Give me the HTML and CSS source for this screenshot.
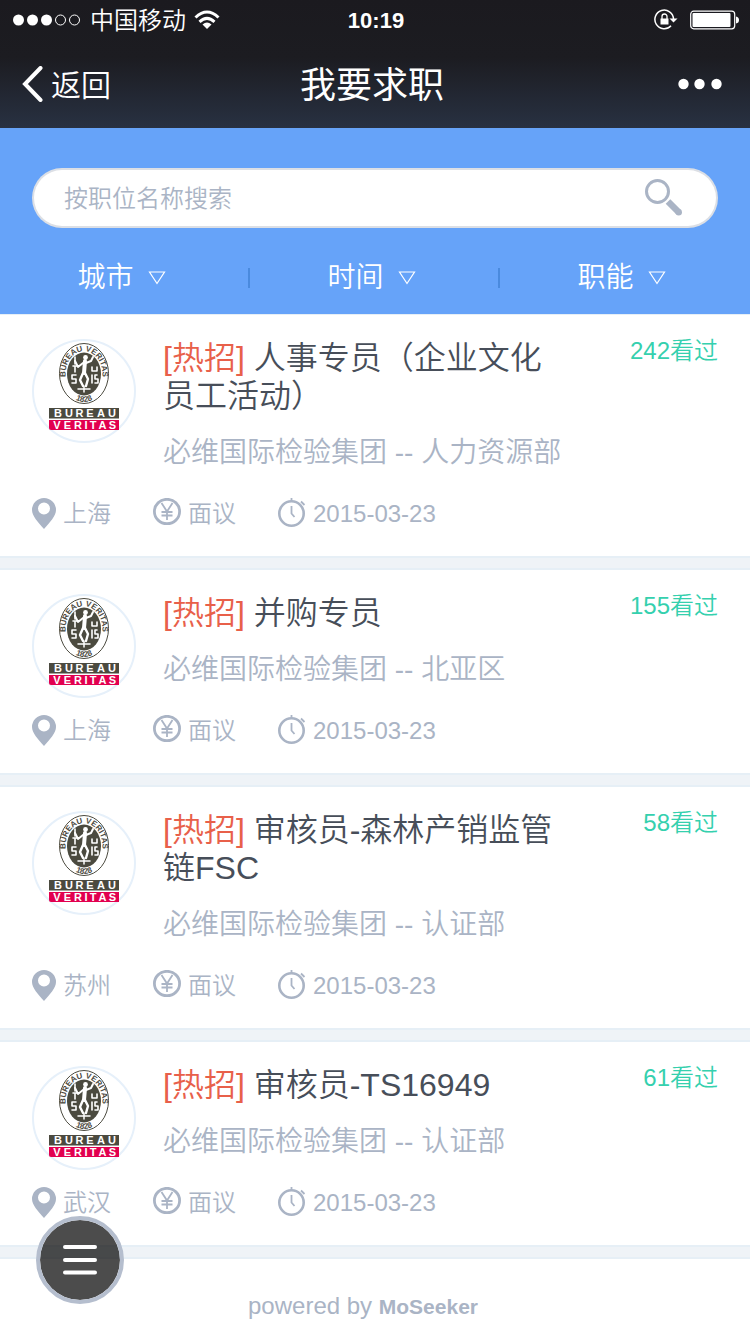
FILE: index.html
```html
<!DOCTYPE html>
<html lang="zh-CN">
<head>
<meta charset="utf-8">
<meta name="viewport" content="width=device-width">
<title>我要求职</title>
<link rel="stylesheet" href="styles.css">
</head>
<body>
<svg class="sprite" aria-hidden="true">
  <symbol id="logo" viewBox="0 0 104 104">
    <circle cx="52" cy="52" r="51" fill="#fff" stroke="#e6f0fa" stroke-width="2"/>
    <ellipse cx="52" cy="34.500" rx="24.500" ry="30" fill="#fff" stroke="#4b4a3f"/>
    <path id="ring-top" d="M35.500 46 A18.500 23.300 0 1 1 68.500 46" fill="none"/>
    <path id="ring-low" d="M36 54 A22 28.500 0 0 0 68 54" fill="none"/>
    <text class="logo-ring"><textPath href="#ring-top" startOffset="50%" text-anchor="middle">BUREAU VERITAS</textPath></text>
    <text class="logo-year"><textPath href="#ring-low" startOffset="50%" text-anchor="middle">1828</textPath></text>
    <ellipse cx="52" cy="35" rx="17" ry="21.500" fill="#4b4a3f"/>
    <g fill="none" stroke="#fff" stroke-linecap="round" stroke-linejoin="round">
      <path d="M53 22 L52 34" stroke-width="4"/>
      <path d="M51 24 L46 28 L43 22 M54 24 L59 22 L61 18" stroke-width="2"/>
      <path d="M51 34 L48 41 L51 47 M53 34 L56 40 L54 47" stroke-width="2.400"/>
      <path d="M43 18 V25 M41 27 H45 M43 28 V33 M40 36 H44 M40 36 V40 H44 V44 H40 M60 28 V32 H65 V28 M60 36 V44 M65 36 H63 V40 H66 V44 H63" stroke-width="1.600"/>
      <path d="M46 50 H58 M52 47 V53" stroke-width="1.500"/>
    </g>
    <circle cx="53.500" cy="18.500" r="2.400" fill="#fff"/>
    <path d="M17 69H87V79.500H17Z" fill="#4b4a3f"/>
    <path d="M17 81H87V91H19Q17 91 17 89Z" fill="#e2004f"/>
    <g class="logo-word">
      <text y="78" x="26 37 47.500 58 69 80">BUREAU</text>
      <text y="89.500" x="25 35.500 46 54 61 70.500 80.500">VERITAS</text>
    </g>
  </symbol>
  <symbol id="pin" viewBox="0 0 24 32">
    <path d="M12 0A12 12 0 0 0 0 12C0 18 6 24 12 31C18 24 24 18 24 12A12 12 0 0 0 12 0ZM12 4.500A6 6 0 1 1 12 16.500A6 6 0 1 1 12 4.500Z" fill="#aab4c5" fill-rule="evenodd"/>
  </symbol>
  <symbol id="yen" viewBox="0 0 28 28">
    <g fill="none" stroke="#aab4c5">
      <ellipse cx="14" cy="13.500" rx="12.600" ry="12.200" stroke-width="2.800"/>
      <path d="M8.500 5L14 13.500L19.500 5M14 13V22M8.500 14H19.500M8.500 17.500H19.500" stroke-width="1.800"/>
    </g>
  </symbol>
  <symbol id="clock" viewBox="0 0 28 30">
    <g fill="none" stroke="#aab4c5">
      <circle cx="13.500" cy="15.500" r="12.200" stroke-width="2.600"/>
      <path d="M13.500 0V4M23 3.500L26.500 7" stroke-width="1.800"/>
      <path d="M13.500 8V15.500L16.500 19" stroke-width="1.800"/>
    </g>
  </symbol>
  <symbol id="caret" viewBox="0 0 18 14">
    <path d="M1.500 1H16.500L9 12.500Z" fill="none" stroke="#fff" stroke-width="1.200"/>
  </symbol>
</svg>

<header class="top">
  <div class="status">
    <div class="status-left">
      <svg width="70" height="14" viewBox="0 0 70 14" aria-hidden="true">
        <g fill="#fff"><circle cx="6.500" cy="7" r="5.500"/><circle cx="20.500" cy="7" r="5.500"/><circle cx="34.500" cy="7" r="5.500"/></g>
        <g fill="none" stroke="#fff"><circle cx="48.500" cy="7" r="5"/><circle cx="62.500" cy="7" r="5"/></g>
      </svg>
      <span class="carrier">中国移动</span>
      <svg width="26" height="20" viewBox="0 0 26 20" aria-hidden="true">
        <g fill="none" stroke="#fff" stroke-width="3"><path d="M1.500 7.500Q13 -3.500 24.500 7.500"/><path d="M5.500 11.800Q13 5 20.500 11.800"/></g>
        <path d="M8.500 14.500Q13 10.500 17.500 14.500L13 19Z" fill="#fff"/>
      </svg>
    </div>
    <time class="status-time">10:19</time>
    <div class="status-right">
      <svg width="24" height="22" viewBox="0 0 24 22" aria-hidden="true">
        <path d="M19.500 10A9.300 9.300 0 1 0 17 16.800" fill="none" stroke="#fff" stroke-width="1.500"/>
        <path d="M15.500 9.500H23.500L19.500 13.500Z" fill="#fff"/>
        <path d="M6.500 9.500H14.500V15.500H6.500Z" fill="#fff"/>
        <path d="M8 10V7.500A2.500 2.500 0 0 1 13 7.500V10" fill="none" stroke="#fff" stroke-width="1.300"/>
      </svg>
      <svg width="50" height="20" viewBox="0 0 50 20" aria-hidden="true">
        <rect x=".7" y="1.200" width="44" height="17.600" rx="3" fill="none" stroke="#fff" stroke-width="1.200"/>
        <rect x="2.500" y="3" width="38" height="14" rx="1" fill="#fff"/>
        <path d="M46 6.500Q49 7 49 10Q49 13 46 13.500Z" fill="#fff"/>
      </svg>
    </div>
  </div>
  <nav class="nav">
    <a class="back" href="#">
      <svg width="21" height="36" viewBox="0 0 21 36" aria-hidden="true"><path d="M18.500 2L3 18L18.500 34" fill="none" stroke="#fff" stroke-width="4" stroke-linecap="round"/></svg>
      <span class="back-text">返回</span>
    </a>
    <h1 class="nav-title">我要求职</h1>
    <button class="more" type="button" aria-label="更多">
      <svg width="44" height="12" viewBox="0 0 44 12"><g fill="#fff"><circle cx="5.500" cy="6" r="5.200"/><circle cx="21.500" cy="6" r="5.200"/><circle cx="38.500" cy="6" r="5.200"/></g></svg>
    </button>
  </nav>
</header>

<section class="tools">
  <form class="search">
    <input class="search-input" type="text" placeholder="按职位名称搜索" aria-label="按职位名称搜索">
    <button class="search-button" type="button" aria-label="搜索">
      <svg width="38" height="38" viewBox="0 0 38 38"><circle cx="12.500" cy="12.500" r="11" fill="none" stroke="#aab4c5" stroke-width="3"/><path d="M23 22.500L33.500 33" stroke="#aab4c5" stroke-width="6.500"/><circle cx="33.700" cy="33.200" r="3.250" fill="#aab4c5"/></svg>
    </button>
  </form>
  <div class="filters">
    <button class="filter" type="button">城市<svg class="caret"><use href="#caret"/></svg></button>
    <button class="filter" type="button">时间<svg class="caret"><use href="#caret"/></svg></button>
    <button class="filter" type="button">职能<svg class="caret"><use href="#caret"/></svg></button>
  </div>
</section>

<main class="jobs">
  <article class="job">
    <div class="job-head">
      <svg class="logo" role="img" aria-label="Bureau Veritas"><use href="#logo"/></svg>
      <div class="job-body">
        <h2 class="job-title"><span class="hot">[热招]</span> 人事专员（企业文化员工活动）</h2>
        <p class="company">必维国际检验集团 -- 人力资源部</p>
      </div>
      <span class="views">242看过</span>
    </div>
    <div class="meta">
      <span class="place"><svg class="pin"><use href="#pin"/></svg>上海</span>
      <span class="pay"><svg class="yen"><use href="#yen"/></svg>面议</span>
      <span class="date"><svg class="clock"><use href="#clock"/></svg>2015-03-23</span>
    </div>
  </article>
  <article class="job">
    <div class="job-head">
      <svg class="logo" role="img" aria-label="Bureau Veritas"><use href="#logo"/></svg>
      <div class="job-body">
        <h2 class="job-title"><span class="hot">[热招]</span> 并购专员</h2>
        <p class="company">必维国际检验集团 -- 北亚区</p>
      </div>
      <span class="views">155看过</span>
    </div>
    <div class="meta">
      <span class="place"><svg class="pin"><use href="#pin"/></svg>上海</span>
      <span class="pay"><svg class="yen"><use href="#yen"/></svg>面议</span>
      <span class="date"><svg class="clock"><use href="#clock"/></svg>2015-03-23</span>
    </div>
  </article>
  <article class="job">
    <div class="job-head">
      <svg class="logo" role="img" aria-label="Bureau Veritas"><use href="#logo"/></svg>
      <div class="job-body">
        <h2 class="job-title"><span class="hot">[热招]</span> 审核员-森林产销监管链FSC</h2>
        <p class="company">必维国际检验集团 -- 认证部</p>
      </div>
      <span class="views">58看过</span>
    </div>
    <div class="meta">
      <span class="place"><svg class="pin"><use href="#pin"/></svg>苏州</span>
      <span class="pay"><svg class="yen"><use href="#yen"/></svg>面议</span>
      <span class="date"><svg class="clock"><use href="#clock"/></svg>2015-03-23</span>
    </div>
  </article>
  <article class="job">
    <div class="job-head">
      <svg class="logo" role="img" aria-label="Bureau Veritas"><use href="#logo"/></svg>
      <div class="job-body">
        <h2 class="job-title"><span class="hot">[热招]</span> 审核员-TS16949</h2>
        <p class="company">必维国际检验集团 -- 认证部</p>
      </div>
      <span class="views">61看过</span>
    </div>
    <div class="meta">
      <span class="place"><svg class="pin"><use href="#pin"/></svg>武汉</span>
      <span class="pay"><svg class="yen"><use href="#yen"/></svg>面议</span>
      <span class="date"><svg class="clock"><use href="#clock"/></svg>2015-03-23</span>
    </div>
  </article>
</main>

<footer class="footer">powered by <strong class="brand">MoSeeker</strong></footer>

<button class="menu" type="button" aria-label="菜单">
  <svg width="34" height="32" viewBox="0 0 34 32"><path d="M2 3H32M2 16H32M2 28.500H32" stroke="#fff" stroke-width="4" stroke-linecap="round"/></svg>
</button>
</body>
</html>
```
FILE: styles.css
```css
* {
  box-sizing: border-box;
}

body {
  margin: 0;
  background: #fff;
  color: #aab4c5;
  font-family: "Liberation Sans", "Noto Sans CJK SC", sans-serif;
  font-size: 24px;
  font-weight: 350;
  line-height: 32px;
}

h1,
h2,
p {
  margin: 0;
  font-weight: 350;
}

svg {
  display: block;
  flex: none;
}

button,
input {
  padding: 0;
  border: 0;
  background: none;
  color: inherit;
  font: inherit;
}

.sprite {
  position: absolute;
  width: 0;
  height: 0;
}

.top {
  background: linear-gradient(#1b1a1f, #1c1c21 45%, #283142);
  color: #fff;
}

.status {
  display: grid;
  grid-template-columns: 1fr auto 1fr;
  align-items: center;
  height: 40px;
  padding: 0 10px 0 12px;
}

.status-left,
.status-right {
  display: flex;
  align-items: center;
  gap: 8px;
}

.status-right {
  justify-content: flex-end;
  gap: 12px;
}

.carrier {
  padding-top: 2px;
}

.status-time {
  padding-top: 2px;
  font-size: 22px;
  font-weight: 700;
}

.nav {
  display: grid;
  grid-template-columns: 1fr auto 1fr;
  align-items: center;
  height: 88px;
  padding: 0 28px 0 22px;
}

.back {
  display: flex;
  align-items: center;
  gap: 8px;
  color: #fff;
  font-size: 30px;
  text-decoration: none;
}

.back-text {
  padding-top: 4px;
}

.nav-title {
  padding-top: 4px;
  font-size: 36px;
  font-weight: 400;
  line-height: 48px;
}

.more {
  justify-self: end;
}

.tools {
  padding-top: 40px;
  background: #66a3f9;
}

.search {
  display: flex;
  height: 60px;
  margin: 0 32px;
}

.search-input {
  flex: 1;
  min-width: 0;
  padding: 2px 0 0 30px;
  border: 2px solid #dcdfe5;
  border-right: 0;
  border-radius: 30px 0 0 30px;
  background: #fff;
}

.search-input::placeholder {
  color: #aab4c5;
  opacity: 1;
}

.search-button {
  display: flex;
  align-items: center;
  justify-content: flex-end;
  width: 138px;
  padding-right: 33px;
  border: 2px solid #dcdfe5;
  border-left: 0;
  border-radius: 0 30px 30px 0;
  background: #fff;
}

.filters {
  display: grid;
  grid-template-columns: repeat(3, 1fr);
  padding: 30px 0 16px;
}

.filter {
  display: flex;
  align-items: center;
  gap: 14px;
  height: 40px;
  padding-left: 31%;
  color: #fff;
  font-size: 28px;
}

.filter:not(:last-child)::after {
  content: "";
  width: 2px;
  height: 20px;
  margin-left: auto;
  background: #4a8ade;
}

.caret {
  width: 18px;
  height: 14px;
}

.jobs {
  display: grid;
  gap: 10px;
  padding-bottom: 10px;
  background: #eff3f7;
}

.job {
  padding: 24px 32px 26px;
  border: solid #e6eff6;
  border-width: 2px 0;
  background: #fff;
}

.job:first-child {
  border-top-width: 1px;
}

.job-head {
  display: flex;
  align-items: flex-start;
}

.logo {
  width: 104px;
  height: 104px;
}

.logo-ring,
.logo-year,
.logo-word {
  font-family: "Liberation Sans", sans-serif;
  font-weight: 700;
}

.logo-ring {
  fill: #4b4a3f;
  font-size: 8px;
}

.logo-year {
  fill: #4b4a3f;
  font-size: 8px;
}

.logo-word {
  fill: #fff;
  font-size: 11px;
  text-anchor: middle;
}

.job-body {
  flex: 1;
  margin: 0 32px 9px 27px;
}

.job-title {
  color: #474e59;
  font-size: 32px;
  line-height: 38px;
}

.hot {
  color: #e8604a;
}

.company {
  margin-top: 19px;
  font-size: 28px;
  line-height: 38px;
}

.views {
  min-width: 120px;
  line-height: 24px;
  color: #35d0ae;
  text-align: right;
}

.meta {
  display: flex;
  gap: 42px;
  margin-top: 17px;
}

.place,
.pay,
.date {
  display: flex;
  align-items: flex-start;
  gap: 7px;
}

.pin {
  width: 24px;
  height: 32px;
}

.yen {
  width: 28px;
  height: 28px;
}

.clock {
  width: 28px;
  height: 30px;
}

.footer {
  padding: 31px 24px 12px 0;
  border-top: 2px solid #e6eff6;
  text-align: center;
}

.brand {
  font-size: 21px;
  font-weight: 700;
}

.menu {
  position: fixed;
  bottom: 30px;
  left: 36px;
  display: grid;
  place-items: center;
  width: 88px;
  height: 88px;
  border: 4px solid #b5bece;
  border-radius: 50%;
  background: rgba(0, 0, 0, 0.7);
  background-clip: padding-box;
}
```
